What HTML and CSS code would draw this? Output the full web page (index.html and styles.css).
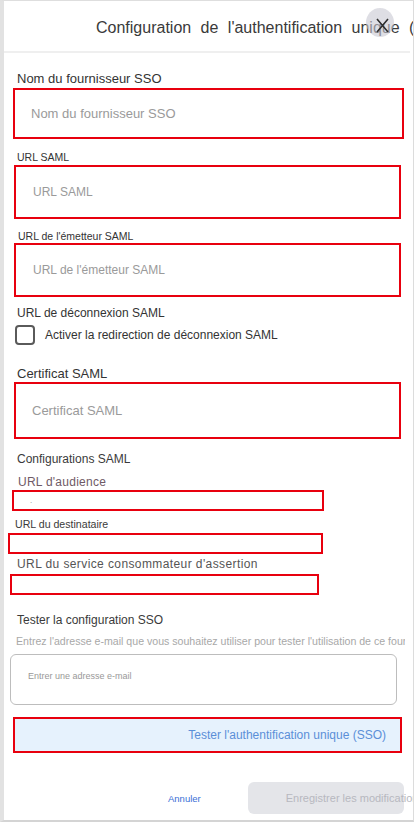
FILE: index.html
```html
<!DOCTYPE html>
<html lang="fr">
<head>
<meta charset="utf-8">
<title>Configuration de l'authentification unique</title>
<link rel="stylesheet" href="styles.css">
</head>
<body>
<div class="panel">
  <header class="header">
    <h1 class="title">Configuration de l'authentification unique (SSO)</h1>
    <button class="close" aria-label="Fermer">
      <svg width="13" height="15" viewBox="0 0 13 15"><path d="M1 1 L12 14 M12 1 L1 14" stroke="#2e2e2e" stroke-width="1.6" fill="none"/></svg>
    </button>
  </header>
  <main class="form">
    <div class="lbl l1">Nom du fournisseur SSO</div>
    <div class="box b1"><span class="ph">Nom du fournisseur SSO</span></div>

    <div class="lbl l2">URL SAML</div>
    <div class="box b2"><span class="ph ph12">URL SAML</span></div>

    <div class="lbl l3">URL de l'émetteur SAML</div>
    <div class="box b3"><span class="ph ph12">URL de l'émetteur SAML</span></div>

    <div class="lbl l4">URL de déconnexion SAML</div>
    <label class="check">
      <span class="cbox"></span>
      <span class="ctext">Activer la redirection de déconnexion SAML</span>
    </label>

    <div class="lbl l5">Certificat SAML</div>
    <div class="box b5"><span class="ph ph13">Certificat SAML</span></div>

    <div class="lbl l6">Configurations SAML</div>
    <div class="lbl l7">URL d'audience</div>
    <div class="sbox s1"><span class="dots">.</span></div>
    <div class="lbl l8">URL du destinataire</div>
    <div class="sbox s2"></div>
    <div class="lbl l9">URL du service consommateur d'assertion</div>
    <div class="sbox s3"></div>

    <div class="lbl l10">Tester la configuration SSO</div>
    <div class="desc">Entrez l'adresse e-mail que vous souhaitez utiliser pour tester l'utilisation de ce fournisseur SSO</div>
    <div class="email"><span class="eph">Entrer une adresse e-mail</span></div>
    <div class="testbtn"><span>Tester l'authentification unique (SSO)</span></div>

    <div class="footer">
      <span class="cancel">Annuler</span>
      <div class="save"><span>Enregistrer les modifications</span></div>
    </div>
  </main>
</div>
</body>
</html>
```
FILE: styles.css
```css
* { box-sizing: border-box; }
html, body { margin: 0; padding: 0; background: #fff; }
body { font-family: "Liberation Sans", Arial, sans-serif; color: #333; }

.panel {
  width: 414px;
  height: 822px;
  border-top: 1px solid #dedede;
  border-left: 4px solid #e2e2e2;
  border-right: 1px solid #dcdcdc;
  border-bottom: 2px solid #d4d4d4;
  overflow: hidden;
  position: relative;
}

.header {
  height: 52px;
  border-bottom: 2px solid #efefef;
  margin-right: 3px;
  position: relative;
}
.title {
  margin: 0;
  padding: 18px 0 0 92px;
  font-weight: normal;
  font-size: 16px;
  line-height: 18px;
  word-spacing: 5px;
  color: #3a3a3a;
  white-space: nowrap;
}
.close {
  position: absolute;
  left: 362px;
  top: 7px;
  width: 28px;
  height: 29px;
  border-radius: 50%;
  border: none;
  background: rgba(200, 200, 210, 0.6);
  padding: 5px 0 0 5px;
  display: flex;
  align-items: center;
  justify-content: center;
}

.form { display: flex; flex-direction: column; align-items: flex-start; }

.lbl { color: #333; white-space: nowrap; }
.l1 { font-size: 13px; line-height: 16px; margin: 18px 0 1px 13px; }
.l2 { font-size: 10.5px; line-height: 14px; margin: 11px 0 1px 13px; }
.l3 { font-size: 10.5px; line-height: 14px; margin: 10px 0 0 14px; }
.l4 { font-size: 12px; line-height: 15px; margin: 9px 0 0 13px; }
.l5 { font-size: 13px; line-height: 16px; margin: 21px 0 0 13px; }
.l6 { font-size: 12px; line-height: 15px; margin: 13px 0 0 13px; color: #3a3a3a; }
.l7 { font-size: 12px; line-height: 15px; margin: 8px 0 0 14px; color: #6f5a66; letter-spacing: 0.25px; }
.l8 { font-size: 10.6px; line-height: 14px; margin: 6px 0 2px 11px; color: #3a3a3a; }
.l9 { font-size: 12px; line-height: 15px; margin: 3px 0 2px 13px; color: #555; letter-spacing: 0.4px; }
.l10 { font-size: 12px; line-height: 15px; margin: 18px 0 0 13px; color: #3a3a3a; }

.box {
  border: 2px solid #e8000e;
  background: #fff;
  display: flex;
  align-items: center;
}
.b1 { margin-left: 9px; width: 391px; height: 51px; padding-left: 16px; }
.b2 { margin-left: 10px; width: 387px; height: 54px; padding-left: 17px; }
.b3 { margin-left: 10px; width: 387px; height: 54px; padding-left: 17px; }
.b5 { margin-left: 10px; width: 387px; height: 57px; padding-left: 16px; }
.ph { color: #9a9a9a; font-size: 13px; }
.ph12 { font-size: 12px; }
.ph13 { font-size: 13px; }

.check { display: flex; align-items: center; margin: 4px 0 0 11px; }
.cbox {
  width: 20px; height: 20px;
  border: 2px solid #5a5a5a;
  border-radius: 4px;
  background: #fff;
}
.ctext { font-size: 12px; color: #333; margin-left: 10px; }

.sbox { border: 2px solid #e8000e; height: 21px; position: relative; }
.s1 { margin-left: 8px; width: 312px; }
.s2 { margin-left: 4px; width: 315px; }
.s3 { margin-left: 6px; width: 309px; }
.dots { position: absolute; left: 16px; top: 4px; font-size: 8px; color: #8a8a8a; }

.desc {
  font-size: 10.6px;
  line-height: 14px;
  color: #a8a8a8;
  white-space: nowrap;
  margin: 6px 0 0 12px;
  width: 389px;
  overflow: hidden;
}
.email {
  margin: 6px 0 0 6px;
  width: 387px;
  height: 51px;
  border: 1px solid #bdbdbd;
  border-radius: 6px;
  padding: 10px 0 0 17px;
}
.eph { font-size: 9px; color: #999; }

.testbtn {
  margin: 12px 0 0 9px;
  width: 389px;
  height: 36px;
  border: 2px solid #e8000e;
  background: #e6f2fd;
  display: flex;
  align-items: center;
  justify-content: flex-end;
  padding-right: 14px;
  font-size: 12px;
  color: #5b8fd8;
}

.footer {
  margin: 29px 0 0 0;
  display: flex;
  align-items: center;
  width: 409px;
}
.cancel { font-size: 9.5px; color: #3b6fd6; margin-left: 164px; }
.save {
  margin-left: 47px;
  width: 156px;
  height: 32px;
  border-radius: 6px;
  background: #e4e5e9;
  display: flex;
  align-items: center;
  padding-left: 38px;
  white-space: nowrap;
  font-size: 11px;
  color: #b7b8bf;
}
```
